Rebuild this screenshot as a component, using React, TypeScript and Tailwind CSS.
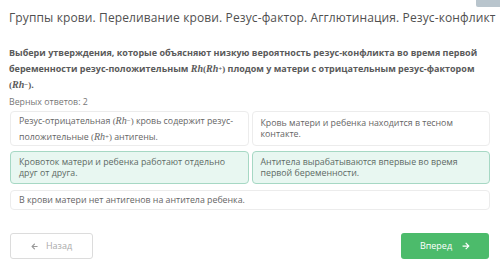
import React from 'react';
import { FaArrowLeft, FaArrowRight } from 'react-icons/fa';

const Rh = ({ sup }: { sup?: string }) => (
  <span className="font-['Liberation_Serif',serif] italic text-[10px]">
    Rh{sup && <sup className="not-italic text-[7px] relative -top-[1px]">{sup}</sup>}
  </span>
);

const Math = ({ sup }: { sup: string }) => (
  <span className="font-['Liberation_Serif',serif]">
    (<Rh sup={sup} />)
  </span>
);

const Card = ({ children, ok, className = '' }: { children: React.ReactNode; ok?: boolean; className?: string }) => (
  <div
    className={
      'flex items-center rounded-[4px] border px-[8px] text-[8.8px] leading-[11px] ' +
      (ok ? 'bg-[#e8f7f1] border-[#a6d8c4] text-[#5d6a65] ' : 'bg-white border-[#ececec] text-[#666] ') +
      className
    }
  >
    <div>{children}</div>
  </div>
);

const App: React.FC = () => {
  return (
    <div className="relative w-[500px] h-[263px] bg-white font-['Open_Sans',sans-serif] overflow-hidden">
      <div className="absolute top-0 right-0 w-[24px] h-[7px] bg-[#b9c5cd] rounded-bl-[2px]" />

      <div className="px-[9px] pt-[8px]">
        <h1 className="text-[12px] tracking-[0.12px] leading-[20px] text-[#505050] whitespace-nowrap">
          Группы крови. Переливание крови. Резус-фактор. Агглютинация. Резус-конфликт
        </h1>

        <p className="mt-[17px] text-[9px] leading-[16px] font-bold text-[#5a5a5a]">
          Выбери утверждения, которые объясняют низкую вероятность резус-конфликта во время первой
          беременности резус-положительным <Rh />
          <Math sup="+" /> плодом у матери с отрицательным резус-фактором <Math sup="−" />.
        </p>

        <div className="mt-[2px] text-[8.8px] leading-[14px] text-[#777]">Верных ответов: 2</div>

        <div className="mt-[2px] ml-[1px] mr-[1px] grid grid-cols-2 gap-x-[3px] gap-y-[5px]">
          <Card className="h-[35px]">
            <div className="leading-[16px]">
              Резус-отрицательная <Math sup="−" /> кровь содержит резус-положительные <Math sup="+" /> антигены.
            </div>
          </Card>
          <Card className="h-[35px]">Кровь матери и ребенка находится в тесном контакте.</Card>
          <Card ok className="h-[33px]">
            Кровоток матери и ребенка работают отдельно друг от друга.
          </Card>
          <Card ok className="h-[33px]">
            Антитела вырабатываются впервые во время первой беременности.
          </Card>
          <Card className="col-span-2 h-[20px] mt-[1px]">В крови матери нет антигенов на антитела ребенка.</Card>
        </div>

        <div className="mt-[23px] ml-[1px] mr-[2px] flex justify-between">
          <button className="flex items-center justify-center gap-[8px] w-[83px] h-[26px] rounded-[3px] border border-[#dcdcdc] bg-white text-[9px] text-[#aaa]">
            <FaArrowLeft className="text-[#999]" size={7} />
            Назад
          </button>
          <button className="flex items-center justify-center gap-[10px] w-[88px] h-[26px] rounded-[3px] bg-[#4cbb6b] text-[9px] text-white">
            Вперед
            <FaArrowRight size={8} />
          </button>
        </div>
      </div>
    </div>
  );
};

export default App;
